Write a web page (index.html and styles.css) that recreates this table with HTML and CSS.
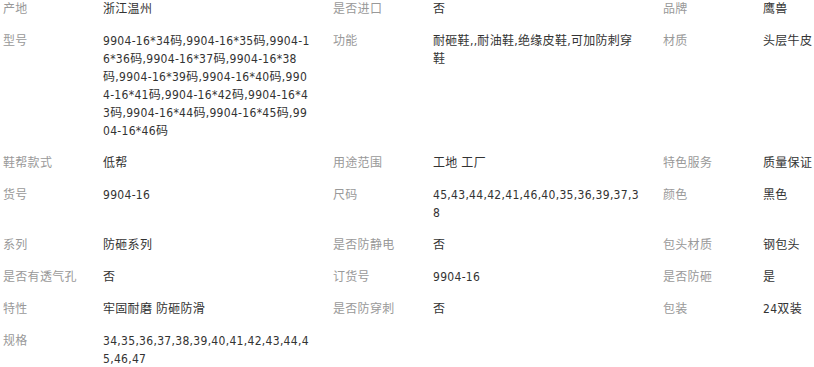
FILE: index.html
```html
<!DOCTYPE html>
<html lang="zh-CN">
<head>
<meta charset="utf-8">
<title>产品参数</title>
<link rel="stylesheet" href="styles.css">
</head>
<body>
<div class="attrs">
  <div class="k">产地</div><div class="v">浙江温州</div>
  <div class="k">是否进口</div><div class="v">否</div>
  <div class="k">品牌</div><div class="v last">鹰兽</div>

  <div class="k">型号</div><div class="v">9904-16*34码,9904-16*35码,9904-16*36码,9904-16*37码,9904-16*38码,9904-16*39码,9904-16*40码,9904-16*41码,9904-16*42码,9904-16*43码,9904-16*44码,9904-16*45码,9904-16*46码</div>
  <div class="k">功能</div><div class="v">耐砸鞋,,耐油鞋,绝缘皮鞋,可加防刺穿鞋</div>
  <div class="k">材质</div><div class="v last">头层牛皮</div>

  <div class="k">鞋帮款式</div><div class="v">低帮</div>
  <div class="k">用途范围</div><div class="v">工地 工厂</div>
  <div class="k">特色服务</div><div class="v last">质量保证</div>

  <div class="k">货号</div><div class="v">9904-16</div>
  <div class="k">尺码</div><div class="v">45,43,44,42,41,46,40,35,36,39,37,38</div>
  <div class="k">颜色</div><div class="v last">黑色</div>

  <div class="k">系列</div><div class="v">防砸系列</div>
  <div class="k">是否防静电</div><div class="v">否</div>
  <div class="k">包头材质</div><div class="v last">钢包头</div>

  <div class="k">是否有透气孔</div><div class="v">否</div>
  <div class="k">订货号</div><div class="v">9904-16</div>
  <div class="k">是否防砸</div><div class="v last">是</div>

  <div class="k">特性</div><div class="v">牢固耐磨 防砸防滑</div>
  <div class="k">是否防穿刺</div><div class="v">否</div>
  <div class="k">包装</div><div class="v last">24双装</div>

  <div class="k">规格</div><div class="v">34,35,36,37,38,39,40,41,42,43,44,45,46,47</div>
  <div class="k"></div><div class="v"></div>
  <div class="k"></div><div class="v last"></div>
</div>
</body>
</html>
```

FILE: styles.css
```css
html, body {
  margin: 0;
  padding: 0;
  background: #fff;
  overflow: hidden;
}

.attrs {
  display: grid;
  grid-template-columns: 100px 230px 100px 230px 100px minmax(0, 1fr);
  font-family: "DejaVu Sans", "Noto Sans CJK SC", sans-serif;
  font-stretch: condensed;
  font-size: 12px;
  line-height: 18px;
  letter-spacing: 0.3px;
}

.k, .v {
  padding: 0 0 14px 3px;
  word-break: break-all;
}

.k {
  color: #999;
  white-space: nowrap;
}

.v {
  color: #333;
  padding-right: 19px;
}

.v.last {
  padding-right: 0;
  white-space: nowrap;
}
```
